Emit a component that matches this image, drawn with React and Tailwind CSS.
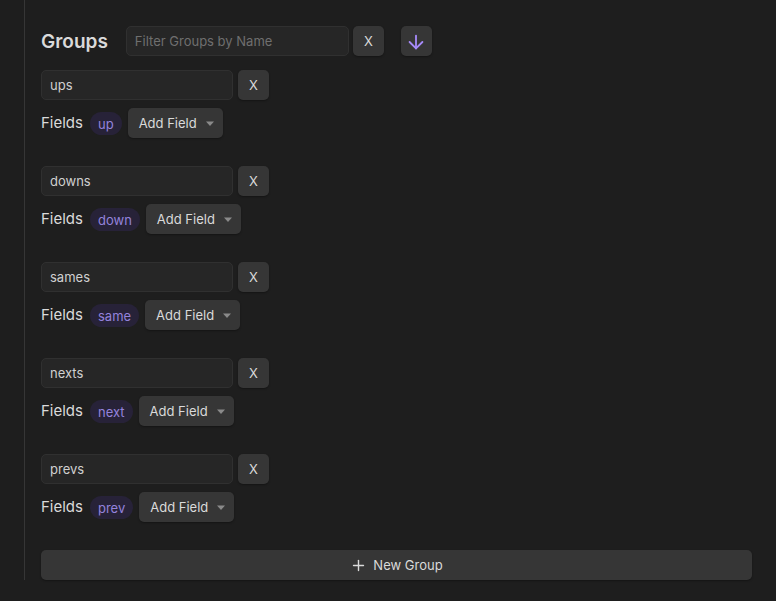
import React, { useState } from 'react'
import { ArrowDown, Plus } from 'lucide-react'

const groups = [
  { name: 'ups', field: 'up' },
  { name: 'downs', field: 'down' },
  { name: 'sames', field: 'same' },
  { name: 'nexts', field: 'next' },
  { name: 'prevs', field: 'prev' },
]

function SmallBtn({ children, className = '' }) {
  return (
    <button
      className={`h-[30px] w-[31px] flex items-center justify-center rounded-[5px] bg-[#363636] pt-px text-[13px] text-[#dadada] shadow-[0_1px_2px_rgba(0,0,0,0.35)] ${className}`}
    >
      {children}
    </button>
  )
}

function Dropdown({ label }) {
  return (
    <button className="h-[30px] flex items-center rounded-[5px] bg-[#363636] pl-[11px] pr-[8px] pt-px text-[13px] text-[#dadada] shadow-[0_1px_2px_rgba(0,0,0,0.35)]">
      <span>{label}</span>
      <svg width="10" height="6" viewBox="0 0 10 6" className="ml-[8px]">
        <path d="M1 0.5h8L5 5z" fill="#8a8a8a" />
      </svg>
    </button>
  )
}

function GroupItem({ group }) {
  const [name, setName] = useState(group.name)
  return (
    <div className="flex flex-col gap-[8px]">
      <div className="flex h-[30px] items-center gap-[5px]">
        <input
          value={name}
          onChange={e => setName(e.target.value)}
          className="h-[30px] w-[192px] rounded-[5px] border border-[#303030] bg-[#262626] px-[8px] text-[13px] text-[#d0d0d0] outline-none"
        />
        <SmallBtn>X</SmallBtn>
      </div>
      <div className="flex h-[30px] items-center">
        <span className="text-[15px] text-[#dadada]">Fields</span>
        <span className="ml-[7px] rounded-full bg-[#272238] px-[8px] pt-[3px] pb-[2px] text-[13px] leading-[18px] text-[#9482dc]">
          {group.field}
        </span>
        <div className="ml-[6px]">
          <Dropdown label="Add Field" />
        </div>
      </div>
    </div>
  )
}

export default function App() {
  const [filter, setFilter] = useState('')
  return (
    <div className="h-[601px] w-[776px] bg-[#1e1e1e] pl-6 font-['Inter',sans-serif] antialiased">
      <div className="border-l border-[#363636] pl-4 pr-6 pt-[26px]">
        <div className="flex h-[30px] items-center">
          <h2 className="text-[19px] font-semibold text-[#dadada] leading-none">Groups</h2>
          <input
            value={filter}
            onChange={e => setFilter(e.target.value)}
            placeholder="Filter Groups by Name"
            className="ml-[18px] h-[30px] w-[223px] rounded-[5px] border border-[#303030] bg-[#262626] px-[8px] text-[13px] text-[#dadada] placeholder:text-[#6f6f6f] outline-none"
          />
          <SmallBtn className="ml-[4px] text-[#a0a0a0]">X</SmallBtn>
          <SmallBtn className="ml-[17px]">
            <ArrowDown size={22} strokeWidth={2} color="#a68af9" />
          </SmallBtn>
        </div>
        <div className="mt-[14px] flex flex-col gap-[28px]">
          {groups.map(g => (
            <GroupItem key={g.name} group={g} />
          ))}
        </div>
        <button className="mt-[28px] flex h-[30px] w-full items-center justify-center gap-[6px] rounded-[5px] bg-[#363636] pt-px text-[13px] text-[#dadada] shadow-[0_1px_2px_rgba(0,0,0,0.35)]">
          <Plus size={17} strokeWidth={2} />
          <span>New Group</span>
        </button>
      </div>
    </div>
  )
}
